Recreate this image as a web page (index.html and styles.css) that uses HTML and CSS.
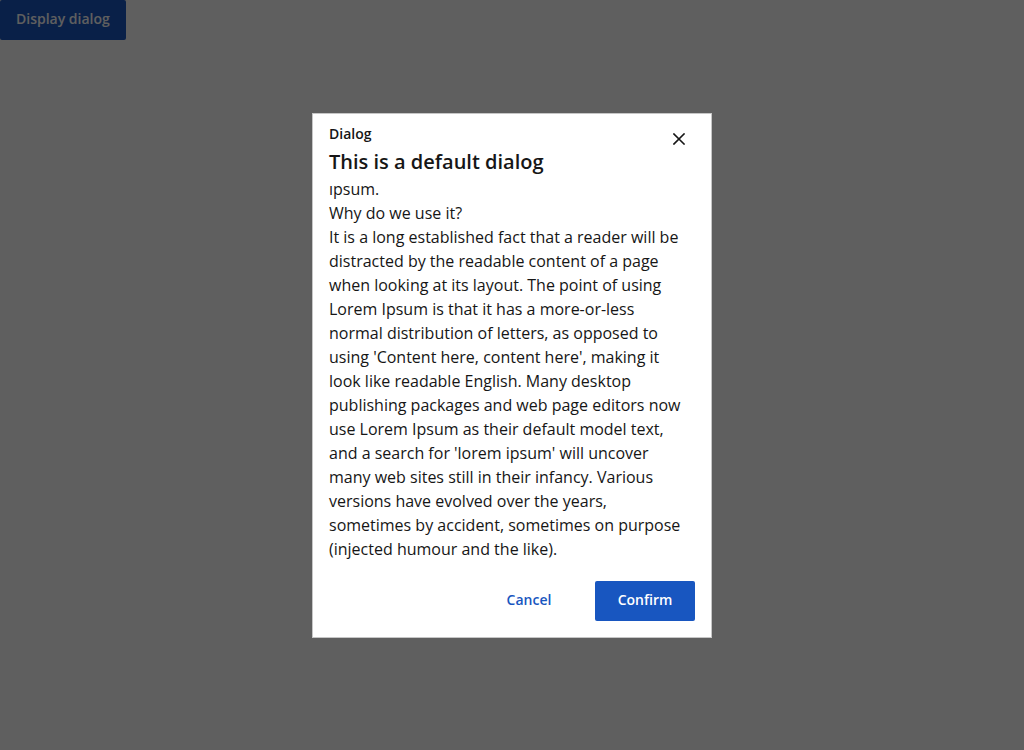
FILE: index.html
```html
<!DOCTYPE html>
<html lang="en">
<head>
<meta charset="utf-8">
<title>Dialog</title>
<link rel="stylesheet" href="styles.css">
</head>
<body>
<button class="trigger" type="button">Display dialog</button>
<div class="overlay">
  <div class="dialog" role="dialog" aria-labelledby="dlg-title">
    <div class="dialog-header">
      <div class="dialog-label">Dialog</div>
      <h2 class="dialog-title" id="dlg-title">This is a default dialog</h2>
      <button class="dialog-close" type="button" aria-label="Close">
        <svg width="12" height="12" viewBox="0 0 12 12"><path d="M1 1L11 11M11 1L1 11" stroke="#161616" stroke-width="1.6" stroke-linecap="square"/></svg>
      </button>
    </div>
    <div class="dialog-body">
      <div class="dialog-content">
        <p>What is Lorem Ipsum?</p>
        <p>Lorem Ipsum is simply dummy text of the printing and typesetting industry. Lorem Ipsum has been the industry's standard dummy text ever since the 1500s, when an unknown printer took a galley of type and scrambled it to make a type specimen book. It has survived not only five centuries, but also the leap into electronic typesetting, remaining essentially unchanged. It was popularised in the 1960s with the release of Letraset sheets containing Lorem Ipsum passages, and more recently with desktop publishing software like Aldus PageMaker including versions of Lorem<br>ipsum.</p>
        <p>Why do we use it?</p>
        <p>It is a long established fact that a reader will be distracted by the readable content of a page when looking at its layout. The point of using Lorem Ipsum is that it has a more-or-less normal distribution of letters, as opposed to using 'Content here, content here', making it look like readable English. Many desktop publishing packages and web page editors now use Lorem Ipsum as their default model text, and a search for 'lorem ipsum' will uncover many web sites still in their infancy. Various versions have evolved over the years, sometimes by accident, sometimes on purpose (injected humour and the like).</p>
      </div>
    </div>
    <div class="dialog-footer">
      <button class="btn btn-ghost" type="button">Cancel</button>
      <button class="btn btn-primary" type="button">Confirm</button>
    </div>
  </div>
</div>
</body>
</html>
```
FILE: styles.css
```css
html, body {
  margin: 0;
  padding: 0;
  height: 100%;
}
body {
  font-family: "Open Sans", "Noto Sans", sans-serif;
  background: #ffffff;
  color: #161616;
}
.trigger {
  display: block;
  margin: 0;
  height: 40px;
  padding: 0 16px 2px;
  border: none;
  border-radius: 2px;
  background: #1856c0;
  color: #ffffff;
  font-family: inherit;
  font-size: 14px;
  line-height: 18px;
  font-weight: 600;
}
.overlay {
  position: fixed;
  inset: 0;
  background: rgba(0, 0, 0, 0.627);
  display: flex;
  align-items: center;
  justify-content: center;
}
.dialog {
  position: relative;
  width: 398px;
  height: 523px;
  background: #ffffff;
  border: 1px solid #c6c6c6;
  display: flex;
  flex-direction: column;
}
.dialog-header {
  padding: 11px 16px 10px 16px;
}
.dialog-label {
  font-size: 14px;
  line-height: 18px;
  font-weight: 600;
  color: #161616;
}
.dialog-title {
  margin: 5px 0 0;
  font-size: 20px;
  line-height: 28px;
  font-weight: 600;
  color: #161616;
}
.dialog-close {
  position: absolute;
  top: 9px;
  right: 16px;
  width: 32px;
  height: 32px;
  padding: 0;
  border: none;
  background: transparent;
  display: flex;
  align-items: center;
  justify-content: center;
}
.dialog-body {
  flex: 1;
  min-height: 0;
  overflow: hidden;
  display: flex;
  flex-direction: column;
  justify-content: flex-end;
  padding: 0 24px 4px 16px;
}
.dialog-content {
  flex: none;
  font-size: 16px;
  line-height: 24px;
  color: #161616;
}
.dialog-content p {
  margin: 0;
}
.dialog-footer {
  display: flex;
  justify-content: flex-end;
  gap: 16px;
  padding: 16px;
}
.btn {
  width: 100px;
  height: 40px;
  border: none;
  border-radius: 2px;
  font-family: inherit;
  font-size: 14px;
  line-height: 18px;
  font-weight: 600;
  padding: 0 0 2px;
}
.btn-ghost {
  background: transparent;
  color: #1856c0;
}
.btn-primary {
  background: #1856c0;
  color: #ffffff;
}
```
